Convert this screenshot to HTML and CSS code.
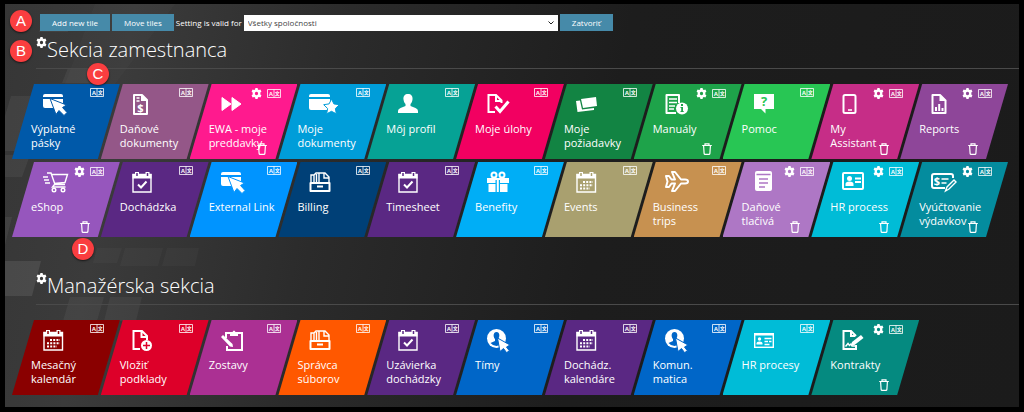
FILE: index.html
```html
<!DOCTYPE html>
<html lang="sk">
<head>
    <meta charset="UTF-8">
    <meta name="viewport" content="width=device-width, initial-scale=1.0">
    <title>Dashboard</title>
    <link rel="stylesheet" href="styles.css">
</head>
<body>
    <svg class="sprite" aria-hidden="true">
        <symbol id="gear" viewBox="0 0 10 10">
            <path fill="currentColor" fill-rule="evenodd" d="M4 0h2l.3 1.4.9.5 1.3-.5 1 1.8-1 .9v1.8l1 .9-1 1.8-1.3-.5-.9.5L6 10H4l-.3-1.4-.9-.5-1.3.5-1-1.8 1-.9V4.1l-1-.9 1-1.8 1.3.5.9-.5zM5 3.500a1.500 1.500 0 1 0 0 3 1.500 1.500 0 0 0 0-3z"/>
        </symbol>
        <symbol id="trash" viewBox="0 0 10 12">
            <path fill="none" stroke="currentColor" stroke-width="1.2" d="M.2 2.5h9.6M3 2.3V.8h4v1.5M1.6 2.8l.5 7.6q.1 1 1 1h3.8q.9 0 1-1l.5-7.6"/>
        </symbol>
        <symbol id="lang" viewBox="0 0 14 9">
            <path fill="none" stroke="currentColor" stroke-width=".8" d="M.5.5h13v8H.5zM7 .5v8"/>
            <text x="3.8" y="6.5" class="lang-a">A</text>
            <text x="10.3" y="6.400" class="lang-b">文</text>
        </symbol>
    </svg>

    <main class="screen">
        <svg class="backdrop" aria-hidden="true">
            <path d="M40 10h28l-5 18H34zM63 64h38l-3 15H57zM6 92h22L13 147H0V112zM0 151h25l-8 22H0zM0 213h7l-7 28z" opacity=".6"/>
            <path d="M92 244h25l-5 15H88zM120 244h38l-5 18h-38zM162 244h32l-4 18h-33z" opacity=".3"/>
            <path d="M0 257h36l-9 35H0z"/>
            <path d="M65 293h34l-7 24H58zM105 293h32l-6 24H99z" opacity=".5"/>
            <path d="M90 0h80l-60 80H60z" opacity=".2"/>
        </svg>

        <div class="toolbar">
            <button type="button">Add new tile</button>
            <button type="button">Move tiles</button>
            <label for="company">Setting is valid for</label>
            <div class="select">
                <select id="company">
                    <option>Všetky spoločnosti</option>
                </select>
                <svg viewBox="0 0 6 4"><path d="M.5.5 3 3 5.5.5"/></svg>
            </div>
            <button type="button">Zatvoriť</button>
        </div>

        <section>
            <h2><button type="button" class="tool" aria-label="Nastavenia"><svg class="gear"><use href="#gear"/></svg></button>Sekcia zamestnanca</h2>
            <div class="tiles" id="employee"></div>
        </section>
        <section>
            <h2><button type="button" class="tool" aria-label="Nastavenia"><svg class="gear"><use href="#gear"/></svg></button>Manažérska sekcia</h2>
            <div class="tiles" id="manager"></div>
        </section>

        <span class="marker marker-a">A</span>
        <span class="marker marker-b">B</span>
        <span class="marker marker-c">C</span>
        <span class="marker marker-d">D</span>
    </main>
    <script src="tiles.js"></script>
</body>
</html>
```
FILE: styles.css
```css
body {
    font-family: 'Segoe UI', 'Open Sans', 'Noto Sans', sans-serif;
    background-color: #000;
    margin: 0;
    padding: 4px 5px 5px;
    color: #fff;
}
.sprite {
    display: none;
}
.screen {
    position: relative;
    padding: 10px 0 12px;
    background: linear-gradient(100deg, #363636 0%, #3b3b3b 12%, #2b2b2b 32%, #1d1d1d 58%, #1b1b1b 100%);
}
.backdrop {
    position: absolute;
    left: 0;
    top: 0;
    width: 100%;
    height: 100%;
    fill: rgba(255, 255, 255, 0.09);
}
button {
    font-family: inherit;
    color: inherit;
    border: none;
    cursor: pointer;
}
.toolbar {
    position: relative;
    display: flex;
    align-items: center;
    gap: 2px;
    margin-left: 35px;
    font-size: 8px;
}
.toolbar button {
    height: 17px;
    padding: 0 12px;
    font-size: 8px;
    background-color: #468aa9;
}
.select select {
    display: block;
    appearance: none;
    width: 314px;
    height: 16px;
    padding: 0 3px;
    border: 1px solid #fff;
    border-radius: 0;
    background-color: #fff;
    color: #444;
    font-family: inherit;
    font-size: 8px;
}
.select {
    position: relative;
}
.select svg {
    position: absolute;
    right: 4px;
    top: 6px;
    width: 6px;
    height: 4px;
    fill: none;
    stroke: #222;
    pointer-events: none;
}
h2 {
    position: relative;
    display: flex;
    align-items: flex-start;
    height: 32px;
    margin: 5px 0 15px 31px;
    border-bottom: 1px solid #4a4a4a;
    font-size: 20px;
    font-weight: 300;
    line-height: 28px;
}
section + section h2 {
    margin-top: 35px;
}
.tool {
    display: flex;
    padding: 0;
    background: none;
}
.gear {
    width: 11px;
    height: 11px;
}
h2 .tool {
    padding-top: 1px;
}
.tiles {
    display: grid;
    grid-template-columns: repeat(11, 1fr);
    row-gap: 3px;
    margin: 0 30px 0 7px;
}
.tile {
    position: relative;
    width: calc(100% + 19px);
    height: 75px;
    clip-path: polygon(22px 0, 100% 0, calc(100% - 22px) 100%, 0 100%);
    background-color: var(--tile);
}
.tile a {
    display: block;
    height: 66px;
    padding: 9px 0 0 19px;
    color: #fff;
    font-size: 11px;
    line-height: 14px;
    text-decoration: none;
}
.icon {
    display: block;
    width: 24px;
    height: 24px;
    margin: 0 0 5px 12px;
    overflow: visible;
    fill: #fff;
}
.icon .line {
    fill: none;
    stroke: #fff;
    stroke-width: 2;
}
.icon .thin {
    fill: none;
    stroke: #fff;
    stroke-width: 1.4;
}
.icon .bold {
    stroke-width: 3;
}
.icon .cut {
    fill: none;
    stroke: var(--tile);
    stroke-width: 1.5;
}
.icon .hole {
    fill: var(--tile);
}
.icon .outlined {
    stroke: var(--tile);
    stroke-width: 1;
}
.icon text {
    font-weight: 700;
    text-anchor: middle;
}
.tools {
    position: absolute;
    top: 4px;
    right: 16px;
    display: flex;
    align-items: center;
    gap: 5px;
}
.lang {
    width: 14px;
    height: 9px;
}
.lang-a,
.lang-b {
    fill: #fff;
    font: 700 6px 'Liberation Sans', sans-serif;
    text-anchor: middle;
}
.lang-b {
    font: 700 5px 'Noto Sans CJK SC', sans-serif;
}
.tile .remove {
    position: absolute;
    right: 30px;
    bottom: 4px;
}
.trash {
    width: 10px;
    height: 12px;
}
.marker {
    position: absolute;
    width: 22px;
    height: 22px;
    border-radius: 50%;
    background-color: #fa3e40;
    box-shadow: 0 1px 2px rgba(0, 0, 0, 0.6);
    font: 15px/22px 'Liberation Sans', sans-serif;
    text-align: center;
}
.marker-a {
    left: 5px;
    top: 6px;
}
.marker-b {
    left: 5px;
    top: 36px;
}
.marker-c {
    left: 82px;
    top: 59px;
}
.marker-d {
    left: 67px;
    top: 234px;
}

.navy { --tile: #0059a9; }
.plum { --tile: #945788; }
.pink { --tile: #ff1a8e; }
.sky { --tile: #009dd9; }
.teal { --tile: #06a295; }
.crimson { --tile: #f20061; }
.forest { --tile: #128443; }
.green { --tile: #1ea34a; }
.lime { --tile: #28c654; }
.magenta { --tile: #c62d87; }
.violet { --tile: #8e4699; }
.lavender { --tile: #9656bd; }
.purple { --tile: #5a2883; }
.azure { --tile: #0094ff; }
.midnight { --tile: #004077; }
.cyan { --tile: #00aef6; }
.olive { --tile: #a9a06f; }
.bronze { --tile: #c79150; }
.lilac { --tile: #ae77c5; }
.aqua { --tile: #00bcd7; }
.petrol { --tile: #048c9e; }
.maroon { --tile: #8a0000; }
.red { --tile: #dd0029; }
.orchid { --tile: #ab3093; }
.orange { --tile: #ff5800; }
.blue { --tile: #0066c8; }
.pine { --tile: #058a80; }
```
FILE: tiles.js
```javascript
// icons are drawn on a 24px grid
const icons = {
    cardClick: `<path d="M2 1h16q2 0 2 2v1H0V3q0-2 2-2zM0 6h20v8q0 1-1 1H2q-2 0-2-2z"/>
        <path class="outlined" d="M7 5.5 23.5 12l-4 2.500 4.500 5-3 3-5-5-3 4z"/>`,
    invoice: `<path class="line" d="M2 2h8l5 5v14H2z" stroke-linejoin="round"/><path d="M9 1v7h7z"/>
        <path class="thin" d="M4.5 5h3M4.5 8h3"/><text x="8.5" y="19" font-size="11">$</text>`,
    forward: `<path stroke="#fff" stroke-linejoin="round" d="M1 4.5 10 11 1 17.500zM11 4.5 20 11l-9 6.500z"/>`,
    cardStar: `<path d="M2 1h17q2 0 2 2v1H0V3q0-2 2-2zM0 6h21v9q0 2-2 2H2q-2 0-2-2z"/>
        <path class="outlined" d="m22.500 6 2.400 4.900 5.400.8-3.900 3.800.9 5.300-4.800-2.500-4.800 2.500.9-5.300-3.900-3.800 5.400-.8z"/>`,
    person: `<path d="M10 1c3 0 5 2 4.500 5.500-.3 2-1 3.500-2 4.500v2l5 2q2.500 1 2.500 3v2H0v-2q0-2 2.500-3l5-2v-2c-1-1-1.700-2.500-2-4.500C5 3 7 1 10 1z"/>`,
    docCheck: `<path class="line" d="M8 19H1.5V2H9l5.500 5.500V10M9 2v6h5"/><path class="line bold" d="m8.500 13.500 4.500 5 8.500-10"/>`,
    cards: `<path d="M5 6 20 4l1 9-14 2z"/><path d="m0 8 4-.6 2 9.100 12-1.500v2L1.500 19z"/>`,
    docInfo: `<path class="line" d="M11 20H1.500V2H14v8" stroke-linejoin="round"/><path class="thin" d="M4 6h8M4 9.500h8M4 13h6M4 16h5"/>
        <circle cx="17" cy="15.500" r="6"/><path class="hole" d="M16 11h2v2h-2zM15.500 14H18v4h.7v1h-3.200v-1h.7v-3h-.7z"/>`,
    question: `<path d="M0 1h20v15h-8.500v4.500L7 16H0z"/><text class="hole" x="10" y="13" font-size="13">?</text>`,
    phone: `<rect class="line" x="1.500" y="2" width="12" height="18" rx="1.500"/><path class="thin" d="M6 17h4"/>`,
    report: `<path class="line" d="M1.500 2H9l5.500 5.500V20h-13z" stroke-linejoin="round"/><path d="M8.500 1v7h7z"/>
        <path class="line" d="M5 18v-4M8.200 18v-7M11.500 18v-3"/>`,
    cart: `<path class="thin" d="M4 2h4l4 11.500h10M8.500 3.500h16l-2.500 8-11 1M11.500 13.500 9.500 16h13M0 6h5M1 9h5M2 12h5"/>
        <circle class="thin" cx="11" cy="19" r="1.800"/><circle class="thin" cx="20" cy="19" r="1.800"/>`,
    calCheck: `<path class="thin" d="M1 3.500h18V21H1z"/><path d="M.5 3h19v4.500H.5zM3 1h4v4H3zM13.500 1h4v4h-4z"/>
        <path class="cut" d="M5 2v3M15.500 2v3"/><path class="line" d="m6 13.500 3 3 5.500-6"/>`,
    binder: `<path class="thin" d="M2 11V4h3v7M5 4l2-2h3v9M10 2h6l4 4v6M15 2v5h5M7.500 3v8"/>
        <path class="line" d="M1.500 12h19v8h-19z" stroke-linejoin="round"/><path class="line" d="M8 15.500h6"/>`,
    gift: `<path d="M0 7h22v5H0zM1.500 13h19v8h-19z"/><path class="hole" d="M8.500 9h4.500v12H8.500z"/><path d="M9.800 9h2v12h-2z"/>
        <circle class="line" cx="7" cy="4" r="2.500"/><circle class="line" cx="15" cy="4" r="2.500"/>`,
    calendar: `<path class="thin" d="M1 3.500h18.500V21H1z"/><path d="M.5 3H20v4.500H.5zM3 1h4v4H3zM13.500 1h4v4h-4z"/>
        <path class="cut" d="M5 2v3M15.500 2v3"/><path class="line" stroke-dasharray="2 1.200" d="M7 11h10M4 14.200h13M4 17.400h10"/>`,
    plane: `<path class="line" stroke-linejoin="round" d="M1 5h3l2.500 3.500H10L7 1h3l6 7.500h4q3 0 3 2t-3 2h-4L10 20H7l3-7.500H6.500L4 16H1l1.500-5.500z"/>`,
    form: `<rect x="1" y="0" width="17" height="20" rx="2"/><path class="cut" d="M2.500 3.500h14M5 8h9M5 12h9M5 16h6"/>`,
    idCard: `<rect class="line" x="1" y="2" width="20" height="16" rx="1"/><circle cx="7.500" cy="7.500" r="2.500"/>
        <path d="M3.500 15v-2q0-2.500 4-2.500t4 2.500v2z"/><path class="line" d="M13 7.500h6M13 11h6"/>`,
    expense: `<path class="line" d="M14 17H3q-2 0-2-2V5q0-2 2-2h17q2 0 2 2v2"/><text x="6" y="14" font-size="11">$</text>
        <path class="thin" d="M10.500 8h7M10.500 12h5m-1 8 1.500-4 7-7 2 2-7 7z"/>`,
    docAdd: `<path class="line" d="M8 20H1.500V2H10l5 5v4M9.500 2v6H15"/><circle cx="14.500" cy="16.500" r="5.500"/>
        <path class="cut" d="M11 16.500h7M14.500 13v7"/>`,
    clipboard: `<path class="line" d="M9 4H5v5M6 17v4h15V4h-4"/><path d="M9 3h2.500q1.500-3 3 0H17v4H9z"/>
        <path d="m0 8 2-2 9.500 9 .5 3-3-.5z"/>`,
    userClick: `<circle cx="9.500" cy="9.500" r="9.500"/><path class="hole" d="M9.500 3C6 3 6 8 8 10v2l-4.500 2q2.500 3 6 3t6-3L11 12v-2c2-2 2-7-1.500-7z"/>
        <path class="outlined" d="M10.500 9 23 16l-3.500 2 3 4-3 1.500-3-4-3.500 3z"/>`,
    profileCard: `<rect class="thin" x=".7" y="4.700" width="18.600" height="13.600"/><path d="M0 4h20v2.500H0z"/>
        <circle cx="5.500" cy="10" r="1.700"/><path d="M2.500 15.500v-1q0-2 3-2t3 2v1z"/><path class="thin" d="M10.500 9.500h7M10.500 12.500h3.500M15 12.500h2.500M10.500 15.500h5"/>`,
    sign: `<path class="line" d="M14 16v4H1.500V2H9l5 5M9 2v5h4"/><path d="m10 13 9-7 2.500 3-9 7-3.500 1z"/>
        <path class="thin" d="m3.500 17.500 2.500-3 1.500 2 1.500-1.500 1 2h3"/>`
};

// [label, colour, icon, editable]
const employee = [
    ['Výplatné<br>pásky', 'navy', 'cardClick'],
    ['Daňové<br>dokumenty', 'plum', 'invoice'],
    ['EWA - moje<br>preddavky', 'pink', 'forward', true],
    ['Moje<br>dokumenty', 'sky', 'cardStar'],
    ['Môj profil', 'teal', 'person'],
    ['Moje úlohy', 'crimson', 'docCheck'],
    ['Moje<br>požiadavky', 'forest', 'cards'],
    ['Manuály', 'green', 'docInfo', true],
    ['Pomoc', 'lime', 'question'],
    ['My<br>Assistant', 'magenta', 'phone', true],
    ['Reports', 'violet', 'report', true],
    ['eShop', 'lavender', 'cart', true],
    ['Dochádzka', 'purple', 'calCheck'],
    ['External Link', 'azure', 'cardClick'],
    ['Billing', 'midnight', 'binder'],
    ['Timesheet', 'purple', 'calCheck'],
    ['Benefity', 'cyan', 'gift'],
    ['Events', 'olive', 'calendar'],
    ['Business<br>trips', 'bronze', 'plane'],
    ['Daňové<br>tlačivá', 'lilac', 'form', true],
    ['HR process', 'aqua', 'idCard', true],
    ['Vyúčtovanie<br>výdavkov', 'petrol', 'expense', true]
];
const manager = [
    ['Mesačný<br>kalendár', 'maroon', 'calendar'],
    ['Vložiť<br>podklady', 'red', 'docAdd'],
    ['Zostavy', 'orchid', 'clipboard'],
    ['Správca<br>súborov', 'orange', 'binder'],
    ['Uzávierka<br>dochádzky', 'purple', 'calCheck'],
    ['Tímy', 'blue', 'userClick'],
    ['Dochádz.<br>kalendáre', 'purple', 'calendar'],
    ['Komun.<br>matica', 'blue', 'userClick'],
    ['HR procesy', 'aqua', 'profileCard'],
    ['Kontrakty', 'pine', 'sign', true]
];

function button(icon, title, extra = '') {
    return `<button type="button" class="tool ${extra}" aria-label="${title}"><svg class="${icon}"><use href="#${icon}"/></svg></button>`;
}

function render(id, tiles) {
    document.getElementById(id).innerHTML = tiles.map(([label, color, icon, editable]) => `
        <div class="tile ${color}">
            <a href="#"><svg class="icon" viewBox="0 0 24 24">${icons[icon]}</svg>${label}</a>
            <div class="tools">${editable ? button('gear', 'Nastavenia') : ''}${button('lang', 'Preklad')}</div>
            ${editable ? button('trash', 'Odstrániť', 'remove') : ''}
        </div>`).join('');
}

render('employee', employee);
render('manager', manager);
```
